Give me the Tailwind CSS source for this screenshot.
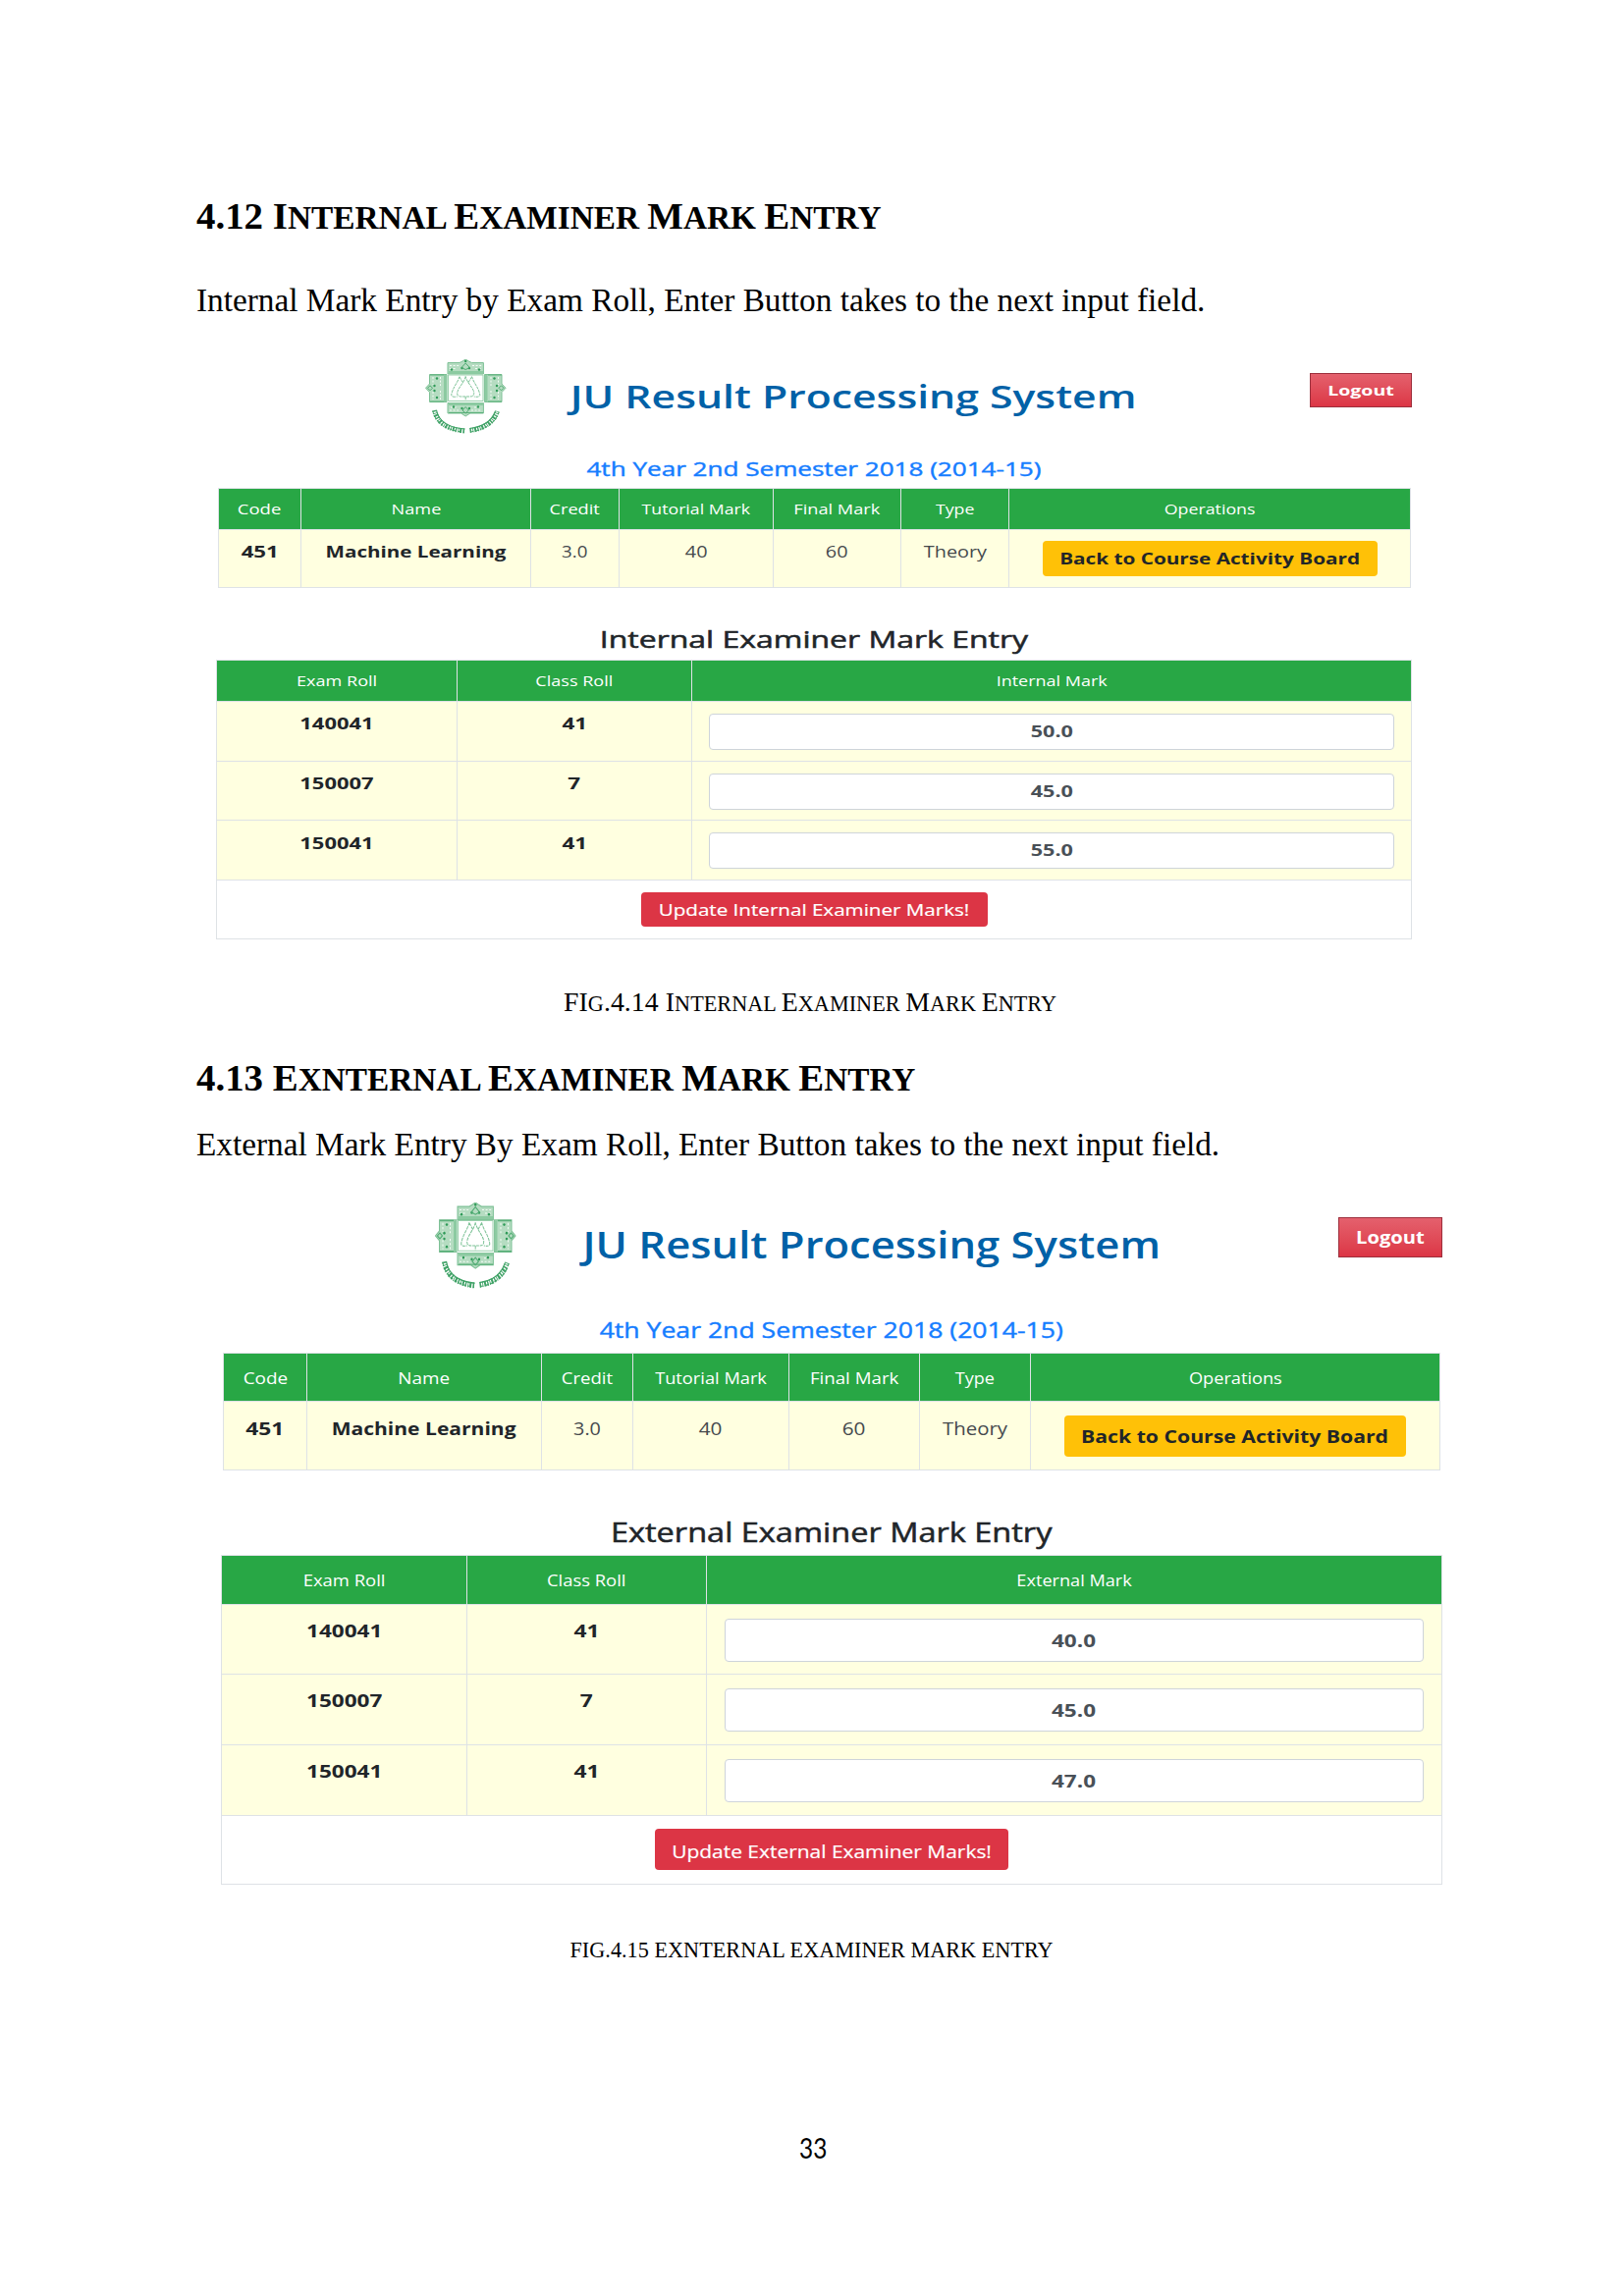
<!DOCTYPE html>
<html lang="en">
<head>
<meta charset="utf-8">
<title>Examiner Mark Entry</title>
<script src="https://cdn.jsdelivr.net/npm/@tailwindcss/browser@4"></script>
</head>
<body class="bg-white">
<main class="flex h-[2339px] w-[1654px] flex-col overflow-hidden bg-white pt-[200px] font-['Liberation_Serif',serif] text-black whitespace-nowrap">

  <h1 class="ml-[200px] h-[40px] text-[38.9px] leading-[40px] font-bold">4.12 I<span class="text-[33.3px] leading-none">NTERNAL </span>E<span class="text-[33.3px] leading-none">XAMINER </span>M<span class="text-[33.3px] leading-none">ARK </span>E<span class="text-[33.3px] leading-none">NTRY</span></h1>
  <p class="mt-[46px] ml-[200px] h-[40px] text-[33.3px] leading-[40px]">Internal Mark Entry by Exam Roll, Enter Button takes to the next input field.</p>

  <!-- Internal examiner screen -->
  <section class="mt-[40px] ml-[220px] flex w-[1218px] flex-col font-['Open_Sans','Noto_Sans',sans-serif] text-[#212529]">
    <header class="flex h-[91px] items-start">
      <svg class="ml-[213px] h-[76px] w-[83px] shrink-0" viewBox="0 0 83 76" preserveAspectRatio="none" fill="none">
        <defs>
          <g id="crest">
            <g fill="#b5dcc1" stroke="#7dc095" stroke-width="1">
              <path d="M23 3.5h12l3-1.5 3.2-2 3.2 2 3 1.500h12v11.500h-36.400z"/>
              <path d="M4.500 15.500h17.500v28h-17.500v-10l-4-4.200 4-4.300z"/>
              <path d="M60.500 15.500h17.500v9.500l4 4.300-4 4.200v10h-17.500z"/>
              <path d="M23 44.500h36.400v10.500h-13.500l-4.700 3-4.700-3h-13.500z"/>
            </g>
            <g stroke="#8ccaa1" stroke-width="3"><path d="M20.500 16v27M62 16v27M24 13.500h35M24 45.500h35"/></g>
            <path d="M24 54.500h35M5 16h14M64 16h14M5 43h14M64 43h14" stroke="#5bb07a" stroke-width="1.200"/>
            <g stroke="#f4fbf6" stroke-width="1" stroke-dasharray="2 1.600"><path d="M25 6.500h10M48 6.500h10M25 9.500h7M51 9.500h7M8 18v8M8 33v8M15.500 18v9M15.500 32v9M67 18v9M67 32v9M74.500 18v8M74.500 33v8M26 49h7M50 49h7M25 52h10M47 52h10"/></g>
            <g fill="#2f9a58">
              <circle cx="27" cy="10.500" r="1.200"/><circle cx="55" cy="10.500" r="1.200"/><circle cx="37.500" cy="9" r="1.200"/><circle cx="45" cy="9" r="1.200"/><circle cx="41.200" cy="2" r="1.200"/>
              <circle cx="12" cy="19.500" r="1.200"/><circle cx="12" cy="39" r="1.200"/><circle cx="9.500" cy="27" r="1.200"/><circle cx="9.500" cy="32" r="1.200"/>
              <circle cx="70.500" cy="19.500" r="1.200"/><circle cx="70.500" cy="39" r="1.200"/><circle cx="73" cy="27" r="1.200"/><circle cx="73" cy="32" r="1.200"/>
              <circle cx="29" cy="48.500" r="1.200"/><circle cx="54" cy="48.500" r="1.200"/><circle cx="37.500" cy="50" r="1.200"/><circle cx="45" cy="50" r="1.200"/>
            </g>
            <path d="M37 8.500l4.200-4.500 4.200 4.500-4.200 2zM38 52l3.200-3.500 3.200 3.500-3.200 3zM2.500 29.300l2.500-2.500 2.500 2.500-2.500 2.500zM75 29.300l2.500-2.500 2.500 2.500-2.500 2.500z" stroke="#4fab72" stroke-width="1"/>
            <path d="M23.500 16h35.500v26.500h-35.500z" fill="#fff" stroke="#9bd0ad" stroke-width="1"/>
            <g stroke="#7cc296" stroke-width="1" stroke-dasharray="3 .8">
              <path d="M41.200 17.500c-1 6-8.500 12-8.500 17.500 0 2.500 2.500 3 4 3h9c2.500 0 4-1 4-3.500 0-5-7.500-11-8.500-17z"/>
              <path d="M35 17.500c-1.500 6-7.500 12-8.300 19 .5 2 3 2 6 1.500M47.500 17.500c1.500 6 7.500 12 8.300 19-.5 2-3 2-6 1.500M35 18l4 6.500M47.500 18l-4 6.500M41.200 38v4"/>
            </g>
            <!-- curved motto under the shield -->
            <g stroke="#3fa266">
              <path d="M9.500 52Q13 70.500 40.500 73" stroke-width="5" stroke-dasharray="1.400 1.300 .8 1 2 1.200"/>
              <path d="M45.500 72.500Q68 69.500 73.500 53" stroke-width="5" stroke-dasharray="1.400 1.300 .8 1 2 1.200"/>
              <path d="M11.500 52Q15 69 40.500 71M45.500 70.500Q66 68 71.500 53" stroke-width="1.200"/>
              <path d="M8 53Q12 71 40 74.500M46 74Q70 70 75 54" stroke-width="1" stroke-dasharray="3 2"/>
            </g>
          </g>
        </defs>
        <use href="#crest"/>
      </svg>
      <div class="ml-[64px] flex h-[75px] w-[579px] items-center justify-center text-[32px] leading-none font-semibold text-[#0061a7]"><span class="inline-block scale-x-[1.335]">JU Result Processing System</span></div>
      <button class="mt-[14px] ml-auto flex h-[35px] w-[104px] items-center justify-center border border-[#9c2f3c] bg-linear-to-b from-[#e4606d] to-[#dc3545] text-[15px] leading-none font-bold text-white"><span class="inline-block scale-x-[1.3]">Logout</span></button>
    </header>
    <div class="flex h-[40px] items-center justify-center pt-[2px] text-[19.6px] leading-none font-medium text-[#157dff] [-webkit-text-stroke:0.4px]"><span class="inline-block scale-x-[1.331]">4th Year 2nd Semester 2018 (2014-15)</span></div>

    <div class="ml-[2px] grid w-[1215px] grid-cols-[84px_234px_90px_157px_130px_110px_409px] border-t border-l border-[#dee2e6] text-center">
      <div class="flex h-[42px] items-center justify-center border-r border-b border-[#dee2e6] bg-[#28a745] text-[15px] leading-none text-white"><span class="inline-block scale-x-[1.234]">Code</span></div>
      <div class="flex h-[42px] items-center justify-center border-r border-b border-[#dee2e6] bg-[#28a745] text-[15px] leading-none text-white"><span class="inline-block scale-x-[1.209]">Name</span></div>
      <div class="flex h-[42px] items-center justify-center border-r border-b border-[#dee2e6] bg-[#28a745] text-[15px] leading-none text-white"><span class="inline-block scale-x-[1.215]">Credit</span></div>
      <div class="flex h-[42px] items-center justify-center border-r border-b border-[#dee2e6] bg-[#28a745] text-[15px] leading-none text-white"><span class="inline-block scale-x-[1.18]">Tutorial Mark</span></div>
      <div class="flex h-[42px] items-center justify-center border-r border-b border-[#dee2e6] bg-[#28a745] text-[15px] leading-none text-white"><span class="inline-block scale-x-[1.213]">Final Mark</span></div>
      <div class="flex h-[42px] items-center justify-center border-r border-b border-[#dee2e6] bg-[#28a745] text-[15px] leading-none text-white"><span class="inline-block scale-x-[1.183]">Type</span></div>
      <div class="flex h-[42px] items-center justify-center border-r border-b border-[#dee2e6] bg-[#28a745] text-[15px] leading-none text-white"><span class="inline-block scale-x-[1.186]">Operations</span></div>
      <div class="h-[59px] border-r border-b border-[#dee2e6] bg-[#ffffe0] pt-[10px] text-[16px] leading-[24px] font-bold"><span class="inline-block scale-x-[1.39]">451</span></div>
      <div class="h-[59px] border-r border-b border-[#dee2e6] bg-[#ffffe0] pt-[10px] text-[16px] leading-[24px] font-bold"><span class="inline-block scale-x-[1.286]">Machine Learning</span></div>
      <div class="h-[59px] border-r border-b border-[#dee2e6] bg-[#ffffe0] pt-[10px] text-[16px] leading-[24px] text-[#45494d]"><span class="inline-block scale-x-[1.17]">3.0</span></div>
      <div class="h-[59px] border-r border-b border-[#dee2e6] bg-[#ffffe0] pt-[10px] text-[16px] leading-[24px] text-[#45494d]"><span class="inline-block scale-x-[1.24]">40</span></div>
      <div class="h-[59px] border-r border-b border-[#dee2e6] bg-[#ffffe0] pt-[10px] text-[16px] leading-[24px] text-[#45494d]"><span class="inline-block scale-x-[1.24]">60</span></div>
      <div class="h-[59px] border-r border-b border-[#dee2e6] bg-[#ffffe0] pt-[10px] text-[16px] leading-[24px] text-[#45494d]"><span class="inline-block scale-x-[1.239]">Theory</span></div>
      <div class="flex h-[59px] items-start justify-center border-r border-b border-[#dee2e6] bg-[#ffffe0] pt-[11px]"><button class="flex h-[36px] w-[341px] items-center justify-center rounded-[4px] bg-[#ffc107] text-[16px] leading-none font-bold"><span class="inline-block scale-x-[1.295]">Back to Course Activity Board</span></button></div>
    </div>

    <h2 class="mt-[31px] flex h-[42px] items-center justify-center pt-[2px] text-[23.3px] leading-none font-medium [-webkit-text-stroke:0.5px]"><span class="inline-block scale-x-[1.373]">Internal Examiner Mark Entry</span></h2>
    <div class="grid w-[1218px] grid-cols-[245px_239px_733px] border-t border-l border-[#dee2e6] text-center">
      <div class="flex h-[42px] items-center justify-center border-r border-b border-[#dee2e6] bg-[#28a745] text-[15px] leading-none text-white"><span class="inline-block scale-x-[1.205]">Exam Roll</span></div>
      <div class="flex h-[42px] items-center justify-center border-r border-b border-[#dee2e6] bg-[#28a745] text-[15px] leading-none text-white"><span class="inline-block scale-x-[1.203]">Class Roll</span></div>
      <div class="flex h-[42px] items-center justify-center border-r border-b border-[#dee2e6] bg-[#28a745] text-[15px] leading-none text-white"><span class="inline-block scale-x-[1.198]">Internal Mark</span></div>

      <div class="h-[61px] border-r border-b border-[#dee2e6] bg-[#ffffe0] pt-[10px] text-[16.3px] leading-[24px] font-bold"><span class="inline-block scale-x-[1.348]">140041</span></div>
      <div class="h-[61px] border-r border-b border-[#dee2e6] bg-[#ffffe0] pt-[10px] text-[16.3px] leading-[24px] font-bold"><span class="inline-block scale-x-[1.38]">41</span></div>
      <div class="h-[61px] border-r border-b border-[#dee2e6] bg-[#ffffe0] px-[17px] pt-[12px]"><div class="flex h-[37px] items-center justify-center rounded-[4px] border border-[#ced4da] bg-white text-[16.3px] leading-none font-bold text-[#495057]"><span class="inline-block scale-x-[1.327]">50.0</span></div></div>

      <div class="h-[60px] border-r border-b border-[#dee2e6] bg-[#ffffe0] pt-[10px] text-[16.3px] leading-[24px] font-bold"><span class="inline-block scale-x-[1.348]">150007</span></div>
      <div class="h-[60px] border-r border-b border-[#dee2e6] bg-[#ffffe0] pt-[10px] text-[16.3px] leading-[24px] font-bold"><span class="inline-block scale-x-[1.38]">7</span></div>
      <div class="h-[60px] border-r border-b border-[#dee2e6] bg-[#ffffe0] px-[17px] pt-[12px]"><div class="flex h-[37px] items-center justify-center rounded-[4px] border border-[#ced4da] bg-white text-[16.3px] leading-none font-bold text-[#495057]"><span class="inline-block scale-x-[1.327]">45.0</span></div></div>

      <div class="h-[61px] border-r border-b border-[#dee2e6] bg-[#ffffe0] pt-[11px] text-[16.3px] leading-[24px] font-bold"><span class="inline-block scale-x-[1.348]">150041</span></div>
      <div class="h-[61px] border-r border-b border-[#dee2e6] bg-[#ffffe0] pt-[11px] text-[16.3px] leading-[24px] font-bold"><span class="inline-block scale-x-[1.38]">41</span></div>
      <div class="h-[61px] border-r border-b border-[#dee2e6] bg-[#ffffe0] px-[17px] pt-[12px]"><div class="flex h-[37px] items-center justify-center rounded-[4px] border border-[#ced4da] bg-white text-[16.3px] leading-none font-bold text-[#495057]"><span class="inline-block scale-x-[1.327]">55.0</span></div></div>

      <div class="col-span-3 flex h-[60px] items-start justify-center border-r border-b border-[#dee2e6] pt-[12px]"><button class="flex h-[35px] w-[353px] items-center justify-center rounded-[4px] bg-[#dc3545] pt-px text-[16px] leading-none font-medium text-white [-webkit-text-stroke:0.2px]"><span class="inline-block scale-x-[1.287]">Update Internal Examiner Marks!</span></button></div>
    </div>
  </section>

  <p class="mt-[48px] ml-[574px] h-[32px] text-[27.8px] leading-[32px] tracking-[0.05px]">FI<span class="text-[22.2px] leading-none">G</span>.4.14 I<span class="text-[22.2px] leading-none">NTERNAL </span>E<span class="text-[22.2px] leading-none">XAMINER </span>M<span class="text-[22.2px] leading-none">ARK </span>E<span class="text-[22.2px] leading-none">NTRY</span></p>

  <h1 class="mt-[41px] ml-[200px] h-[40px] text-[38.9px] leading-[40px] font-bold">4.13 E<span class="text-[33.3px] leading-none">XNTERNAL </span>E<span class="text-[33.3px] leading-none">XAMINER </span>M<span class="text-[33.3px] leading-none">ARK </span>E<span class="text-[33.3px] leading-none">NTRY</span></h1>
  <p class="mt-[28px] ml-[200px] h-[40px] text-[33.3px] leading-[40px]">External Mark Entry By Exam Roll, Enter Button takes to the next input field.</p>

  <!-- External examiner screen -->
  <section class="mt-[39px] ml-[225px] flex w-[1244px] flex-col font-['Open_Sans','Noto_Sans',sans-serif] text-[#212529]">
    <header class="flex h-[106px] items-start">
      <svg class="ml-[218px] h-[88px] w-[83px] shrink-0" viewBox="0 0 83 76" preserveAspectRatio="none" fill="none"><use href="#crest"/></svg>
      <div class="ml-[67px] flex h-[85px] w-[590px] items-center justify-center text-[37px] leading-none font-semibold text-[#0061a7]"><span class="inline-block scale-x-[1.178]">JU Result Processing System</span></div>
      <button class="mt-[15px] ml-auto flex h-[41px] w-[106px] items-center justify-center border border-[#9c2f3c] bg-linear-to-b from-[#e4606d] to-[#dc3545] pt-px text-[17.3px] leading-none font-bold text-white"><span class="inline-block scale-x-[1.164]">Logout</span></button>
    </header>
    <div class="flex h-[47px] items-center justify-center pt-[2px] text-[22.5px] leading-none font-medium text-[#157dff] [-webkit-text-stroke:0.4px]"><span class="inline-block scale-x-[1.182]">4th Year 2nd Semester 2018 (2014-15)</span></div>

    <div class="ml-[2px] grid w-[1240px] grid-cols-[85px_239px_93px_159px_133px_113px_417px] border-t border-l border-[#dee2e6] text-center">
      <div class="flex h-[49px] items-center justify-center border-r border-b border-[#dee2e6] bg-[#28a745] text-[17px] leading-none text-white"><span class="inline-block scale-x-[1.114]">Code</span></div>
      <div class="flex h-[49px] items-center justify-center border-r border-b border-[#dee2e6] bg-[#28a745] text-[17px] leading-none text-white"><span class="inline-block scale-x-[1.111]">Name</span></div>
      <div class="flex h-[49px] items-center justify-center border-r border-b border-[#dee2e6] bg-[#28a745] text-[17px] leading-none text-white"><span class="inline-block scale-x-[1.093]">Credit</span></div>
      <div class="flex h-[49px] items-center justify-center border-r border-b border-[#dee2e6] bg-[#28a745] text-[17px] leading-none text-white"><span class="inline-block scale-x-[1.073]">Tutorial Mark</span></div>
      <div class="flex h-[49px] items-center justify-center border-r border-b border-[#dee2e6] bg-[#28a745] text-[17px] leading-none text-white"><span class="inline-block scale-x-[1.1]">Final Mark</span></div>
      <div class="flex h-[49px] items-center justify-center border-r border-b border-[#dee2e6] bg-[#28a745] text-[17px] leading-none text-white"><span class="inline-block scale-x-[1.06]">Type</span></div>
      <div class="flex h-[49px] items-center justify-center border-r border-b border-[#dee2e6] bg-[#28a745] text-[17px] leading-none text-white"><span class="inline-block scale-x-[1.07]">Operations</span></div>
      <div class="h-[70px] border-r border-b border-[#dee2e6] bg-[#ffffe0] pt-[13px] text-[18.5px] leading-[28px] font-bold"><span class="inline-block scale-x-[1.23]">451</span></div>
      <div class="h-[70px] border-r border-b border-[#dee2e6] bg-[#ffffe0] pt-[13px] text-[18.5px] leading-[28px] font-bold"><span class="inline-block scale-x-[1.137]">Machine Learning</span></div>
      <div class="h-[70px] border-r border-b border-[#dee2e6] bg-[#ffffe0] pt-[13px] text-[18.5px] leading-[28px] text-[#45494d]"><span class="inline-block scale-x-[1.07]">3.0</span></div>
      <div class="h-[70px] border-r border-b border-[#dee2e6] bg-[#ffffe0] pt-[13px] text-[18.5px] leading-[28px] text-[#45494d]"><span class="inline-block scale-x-[1.12]">40</span></div>
      <div class="h-[70px] border-r border-b border-[#dee2e6] bg-[#ffffe0] pt-[13px] text-[18.5px] leading-[28px] text-[#45494d]"><span class="inline-block scale-x-[1.12]">60</span></div>
      <div class="h-[70px] border-r border-b border-[#dee2e6] bg-[#ffffe0] pt-[13px] text-[18.5px] leading-[28px] text-[#45494d]"><span class="inline-block scale-x-[1.103]">Theory</span></div>
      <div class="flex h-[70px] items-start justify-center border-r border-b border-[#dee2e6] bg-[#ffffe0] pt-[14px]"><button class="flex h-[42px] w-[348px] items-center justify-center rounded-[4px] bg-[#ffc107] text-[18.5px] leading-none font-bold"><span class="inline-block scale-x-[1.146]">Back to Course Activity Board</span></button></div>
    </div>

    <h2 class="mt-[37px] flex h-[49px] items-center justify-center pt-[2px] text-[27px] leading-none font-medium [-webkit-text-stroke:0.5px]"><span class="inline-block scale-x-[1.204]">External Examiner Mark Entry</span></h2>
    <div class="grid w-[1244px] grid-cols-[250px_244px_749px] border-t border-l border-[#dee2e6] text-center">
      <div class="flex h-[50px] items-center justify-center border-r border-b border-[#dee2e6] bg-[#28a745] text-[17px] leading-none text-white"><span class="inline-block scale-x-[1.085]">Exam Roll</span></div>
      <div class="flex h-[50px] items-center justify-center border-r border-b border-[#dee2e6] bg-[#28a745] text-[17px] leading-none text-white"><span class="inline-block scale-x-[1.083]">Class Roll</span></div>
      <div class="flex h-[50px] items-center justify-center border-r border-b border-[#dee2e6] bg-[#28a745] text-[17px] leading-none text-white"><span class="inline-block scale-x-[1.066]">External Mark</span></div>

      <div class="h-[71px] border-r border-b border-[#dee2e6] bg-[#ffffe0] pt-[12px] text-[18.5px] leading-[28px] font-bold"><span class="inline-block scale-x-[1.218]">140041</span></div>
      <div class="h-[71px] border-r border-b border-[#dee2e6] bg-[#ffffe0] pt-[12px] text-[18.5px] leading-[28px] font-bold"><span class="inline-block scale-x-[1.23]">41</span></div>
      <div class="h-[71px] border-r border-b border-[#dee2e6] bg-[#ffffe0] px-[18px] pt-[14px]"><div class="flex h-[44px] items-center justify-center rounded-[4px] border border-[#ced4da] bg-white text-[18.5px] leading-none font-bold text-[#495057]"><span class="inline-block scale-x-[1.215]">40.0</span></div></div>

      <div class="h-[72px] border-r border-b border-[#dee2e6] bg-[#ffffe0] pt-[12px] text-[18.5px] leading-[28px] font-bold"><span class="inline-block scale-x-[1.218]">150007</span></div>
      <div class="h-[72px] border-r border-b border-[#dee2e6] bg-[#ffffe0] pt-[12px] text-[18.5px] leading-[28px] font-bold"><span class="inline-block scale-x-[1.23]">7</span></div>
      <div class="h-[72px] border-r border-b border-[#dee2e6] bg-[#ffffe0] px-[18px] pt-[14px]"><div class="flex h-[44px] items-center justify-center rounded-[4px] border border-[#ced4da] bg-white text-[18.5px] leading-none font-bold text-[#495057]"><span class="inline-block scale-x-[1.215]">45.0</span></div></div>

      <div class="h-[72px] border-r border-b border-[#dee2e6] bg-[#ffffe0] pt-[12px] text-[18.5px] leading-[28px] font-bold"><span class="inline-block scale-x-[1.218]">150041</span></div>
      <div class="h-[72px] border-r border-b border-[#dee2e6] bg-[#ffffe0] pt-[12px] text-[18.5px] leading-[28px] font-bold"><span class="inline-block scale-x-[1.23]">41</span></div>
      <div class="h-[72px] border-r border-b border-[#dee2e6] bg-[#ffffe0] px-[18px] pt-[14px]"><div class="flex h-[44px] items-center justify-center rounded-[4px] border border-[#ced4da] bg-white text-[18.5px] leading-none font-bold text-[#495057]"><span class="inline-block scale-x-[1.215]">47.0</span></div></div>

      <div class="col-span-3 flex h-[70px] items-start justify-center border-r border-b border-[#dee2e6] pt-[13px]"><button class="flex h-[42px] w-[360px] items-center justify-center rounded-[4px] bg-[#dc3545] pt-[3px] text-[18px] leading-none font-medium text-white [-webkit-text-stroke:0.2px]"><span class="inline-block scale-x-[1.163]">Update External Examiner Marks!</span></button></div>
    </div>
  </section>

  <p class="mt-[54px] ml-[580.5px] h-[26px] text-[22.2px] leading-[26px] tracking-[0.03px]">FIG.4.15 EXNTERNAL EXAMINER MARK ENTRY</p>
  <footer class="mt-[172px] flex h-[32px] justify-center pl-[2px] font-['Lato',sans-serif] text-[28px] leading-[32px]"><span class="inline-block scale-x-[0.87]">33</span></footer>
</main>
</body>
</html>
